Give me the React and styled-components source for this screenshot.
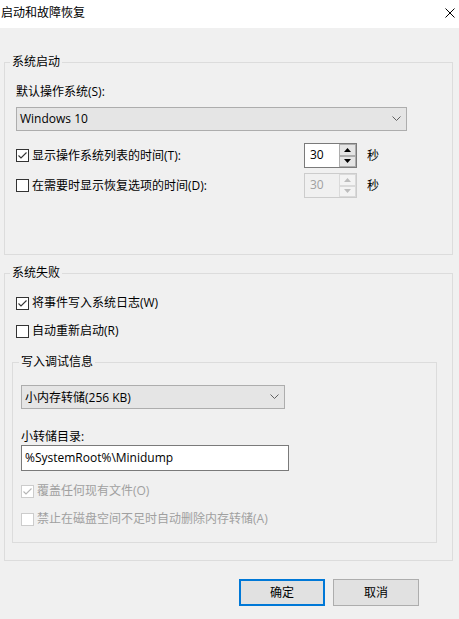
import React from "react";
import styled, { createGlobalStyle } from "styled-components";

const GlobalStyle = createGlobalStyle`
  html, body { margin: 0; padding: 0; }
  body {
    background: #f0f0f0;
    font-family: "Open Sans", "Noto Sans CJK SC", sans-serif;
    font-size: 12px;
    color: #000;
  }
  * { box-sizing: border-box; }
`;

const Window = styled.div`
  width: 459px;
  height: 619px;
  background: #f0f0f0;
  display: flex;
  flex-direction: column;
  overflow: hidden;
`;

const TitleBar = styled.div`
  height: 28px;
  flex: none;
  background: #fff;
  display: flex;
  align-items: center;
  justify-content: space-between;
  padding: 0 4px 2px 1px;
  line-height: 16px;
`;

const Content = styled.div`
  display: flex;
  flex-direction: column;
  padding: 0 6px 0 4px;
`;

const Group = styled.fieldset`
  margin: ${(p) => p.$mt || 0}px 0 0 ${(p) => p.$ml || 0}px;
  align-self: stretch;
  border: 1px solid #dcdcdc;
  padding: 0 ${(p) => p.$pr || 0}px ${(p) => p.$pb}px ${(p) => p.$pl}px;
  min-width: 0;
  display: flex;
  flex-direction: column;
  align-items: flex-start;
`;

const Legend = styled.legend`
  padding: 0 2px;
  margin-left: ${(p) => p.$ml}px;
  line-height: 16px;
  color: #000;
`;

const Label = styled.div`
  line-height: 16px;
  margin-top: ${(p) => p.$mt || 0}px;
`;

const Select = styled.div`
  margin-top: ${(p) => p.$mt || 0}px;
  width: ${(p) => p.$w}px;
  height: 24px;
  border: 1px solid #adadad;
  background: #e5e5e5;
  display: flex;
  align-items: center;
  justify-content: space-between;
  padding: 0 ${(p) => p.$pr}px 1px 3px;
`;

const TextBox = styled.div`
  width: ${(p) => p.$w}px;
  height: 26px;
  border: 1px solid #7a7a7a;
  background: #fff;
  display: flex;
  align-items: center;
  padding: 0 3px 1px;
`;

const TimeRow = styled.div`
  margin-top: ${(p) => p.$mt}px;
  display: grid;
  grid-template-columns: 278px 53px auto;
  column-gap: 10px;
  align-items: center;
  height: 25px;
`;

const CheckRow = styled.label`
  margin-top: ${(p) => p.$mt || 0}px;
  display: flex;
  align-items: center;
  gap: 3px;
  height: 16px;
  line-height: 16px;
  color: ${(p) => (p.$disabled ? "#a0a0a0" : "#000")};
`;

const Box = styled.span`
  width: 13px;
  height: 13px;
  flex: none;
  border: 1px solid ${(p) => (p.$disabled ? "#cccccc" : "#333333")};
  background: #fff;
  display: flex;
  align-items: center;
  justify-content: center;
`;

const SpinBox = styled.div`
  width: 53px;
  height: 25px;
  display: flex;
  border: 1px solid ${(p) => (p.$disabled ? "#cccccc" : "#7a7a7a")};
  background: ${(p) => (p.$disabled ? "#f0f0f0" : "#fff")};
  color: ${(p) => (p.$disabled ? "#a0a0a0" : "#000")};
`;

const SpinValue = styled.div`
  flex: 1;
  padding-left: 5px;
  line-height: 22px;
`;

const SpinButtons = styled.div`
  width: 17px;
  display: flex;
  flex-direction: column;
  background: #f0f0f0;
`;

const SpinButton = styled.div`
  flex: 1;
  border: 1px solid ${(p) => (p.$disabled ? "#dadada" : "#adadad")};
  background: ${(p) => (p.$disabled ? "#f3f3f3" : "#e5e5e5")};
  display: flex;
  align-items: center;
  justify-content: center;
`;

const Unit = styled.span`
  line-height: 16px;
`;

const ButtonRow = styled.div`
  margin-top: 18px;
  display: flex;
  justify-content: flex-end;
  gap: 8px;
  padding-right: 34px;
`;

const Button = styled.button`
  width: 86px;
  height: 27px;
  font: inherit;
  color: #000;
  background: #e1e1e1;
  border: ${(p) => (p.$default ? "2px solid #0078d7" : "1px solid #adadad")};
  padding: 0 0 1px;
  cursor: default;
`;

const Chevron = () => (
  <svg width="9" height="5" viewBox="0 0 9 5">
    <path d="M0.5 0.5 L4.5 4.5 L8.5 0.5" fill="none" stroke="#606060" strokeWidth="1" />
  </svg>
);

const Check = ({ color }) => (
  <svg width="11" height="11" viewBox="0 0 11 11">
    <path d="M1.5 5.5 L4 8 L9.5 2.5" fill="none" stroke={color} strokeWidth="1.1" />
  </svg>
);

const Arrow = ({ up, color }) => (
  <svg width="7" height="4" viewBox="0 0 7 4">
    <path d={up ? "M0 4 L3.5 0 L7 4 Z" : "M0 0 L3.5 4 L7 0 Z"} fill={color} />
  </svg>
);

const CheckBox = ({ checked, disabled, mt, children }) => (
  <CheckRow $mt={mt} $disabled={disabled}>
    <Box $disabled={disabled}>
      {checked && <Check color={disabled ? "#b5b5b5" : "#333"} />}
    </Box>
    {children}
  </CheckRow>
);

const Spinner = ({ value, disabled }) => {
  const c = disabled ? "#bdbdbd" : "#000";
  return (
    <SpinBox $disabled={disabled}>
      <SpinValue>{value}</SpinValue>
      <SpinButtons>
        <SpinButton $disabled={disabled}>
          <Arrow up color={c} />
        </SpinButton>
        <SpinButton $disabled={disabled}>
          <Arrow color={c} />
        </SpinButton>
      </SpinButtons>
    </SpinBox>
  );
};

export default function App() {
  return (
    <>
      <GlobalStyle />
      <Window>
        <TitleBar>
          <span>启动和故障恢复</span>
          <svg width="10" height="10" viewBox="0 0 10 10">
            <path d="M0.5 0.5 L9.5 9.5 M9.5 0.5 L0.5 9.5" stroke="#000" strokeWidth="1" />
          </svg>
        </TitleBar>
        <Content>
          <Group $mt={26} $pl={11} $pr={15} $pb={56}>
            <Legend $ml={-6}>系统启动</Legend>
            <Label $mt={14}>默认操作系统(S):</Label>
            <Select $mt={7} $w={391} $pr={5}>
              <span>Windows 10</span>
              <Chevron />
            </Select>
            <TimeRow $mt={12}>
              <CheckBox checked>显示操作系统列表的时间(T):</CheckBox>
              <Spinner value="30" />
              <Unit>秒</Unit>
            </TimeRow>
            <TimeRow $mt={5}>
              <CheckBox>在需要时显示恢复选项的时间(D):</CheckBox>
              <Spinner value="30" disabled />
              <Unit>秒</Unit>
            </TimeRow>
          </Group>

          <Group $mt={10} $pl={11} $pr={15} $pb={17}>
            <Legend $ml={-6}>系统失败</Legend>
            <CheckBox checked mt={14}>将事件写入系统日志(W)</CheckBox>
            <CheckBox mt={12}>自动重新启动(R)</CheckBox>
            <Group $mt={15} $ml={-4} $pl={8} $pr={8} $pb={15}>
              <Legend $ml={-2}>写入调试信息</Legend>
              <Select $mt={15} $w={264} $pr={5}>
                <span>小内存转储(256 KB)</span>
                <Chevron />
              </Select>
              <Label $mt={20}>小转储目录:</Label>
              <TextBox $w={268}>%SystemRoot%\Minidump</TextBox>
              <CheckBox checked disabled mt={12}>覆盖任何现有文件(O)</CheckBox>
              <CheckBox disabled mt={12}>禁止在磁盘空间不足时自动删除内存转储(A)</CheckBox>
            </Group>
          </Group>

          <ButtonRow>
            <Button $default>确定</Button>
            <Button>取消</Button>
          </ButtonRow>
        </Content>
      </Window>
    </>
  );
}
